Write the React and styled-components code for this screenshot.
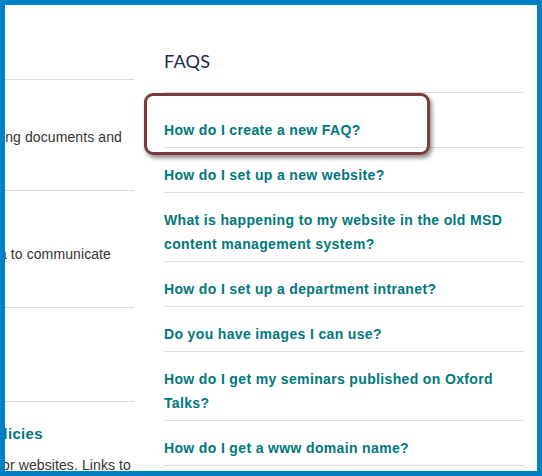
import React from 'react';
import styled, { createGlobalStyle } from 'styled-components';

const GlobalStyle = createGlobalStyle`
  html, body {
    margin: 0;
    padding: 0;
    background: #fff;
  }
`;

const Frame = styled.div`
  box-sizing: border-box;
  width: 542px;
  height: 476px;
  border: 5px solid #0081c6;
  background: #fff;
  overflow: hidden;
  display: flex;
  font-family: "Liberation Sans", Arial, sans-serif;
`;

const LeftColumn = styled.div`
  flex: 0 0 129px;
  padding-top: 74px;
  overflow: hidden;
`;

const Section = styled.div`
  box-sizing: border-box;
  height: ${props => props.h ? props.h + 'px' : 'auto'};
  border-top: 1px solid #dddddd;
  padding-top: ${props => props.pt}px;
`;

const Line = styled.div`
  display: flex;
  justify-content: flex-end;
  white-space: nowrap;
  padding-right: ${props => props.end}px;
  font-size: ${props => props.bold ? 15 : 14}px;
  font-weight: ${props => props.bold ? 700 : 400};
  line-height: 24px;
  letter-spacing: ${props => props.bold ? 0.35 : 0.1}px;
  color: ${props => props.bold ? '#00787c' : '#333333'};
  margin-bottom: ${props => props.mb || 0}px;
`;

const RightColumn = styled.div`
  flex: 0 0 360px;
  margin-left: 30px;
  padding-top: 44px;
`;

const Heading = styled.h2`
  margin: 0 0 10px;
  padding-bottom: 19px;
  border-bottom: 1px solid #dddddd;
  font-family: Lato, "Open Sans", sans-serif;
  font-weight: 400;
  font-size: 18px;
  line-height: 24px;
  letter-spacing: 0.3px;
  color: #1c2b47;
`;

const List = styled.ul`
  list-style: none;
  margin: 0;
  padding: 0;
`;

const Item = styled.li`
  position: relative;
  padding: 15px 0 5px;
  border-bottom: 1px solid #dddddd;
`;

const Link = styled.a`
  font-size: 14px;
  font-weight: 700;
  line-height: 24px;
  color: #00787c;
  text-decoration: none;
  letter-spacing: 0.35px;
`;

// annotation drawn over the first question
const Highlight = styled.div`
  position: absolute;
  left: -20px;
  top: -10px;
  width: 286px;
  height: 62px;
  box-sizing: border-box;
  border: 3px solid #7b3b3e;
  border-radius: 9px;
  box-shadow: 2px 3px 4px rgba(0, 0, 0, 0.45);
  pointer-events: none;
`;

const faqs = [
  'How do I create a new FAQ?',
  'How do I set up a new website?',
  'What is happening to my website in the old MSD content management system?',
  'How do I set up a department intranet?',
  'Do you have images I can use?',
  'How do I get my seminars published on Oxford Talks?',
  'How do I get a www domain name?',
];

export default function App() {
  return (
    <>
      <GlobalStyle />
      <Frame>
        <LeftColumn>
          <Section h={111} pt={45}>
            <Line end={12}>Guidance on managing documents and</Line>
          </Section>
          <Section h={117} pt={51}>
            <Line end={23}>Using social media to communicate</Line>
          </Section>
          <Section h={94} pt={0} />
          <Section pt={20}>
            <Line bold end={91} mb={7}>Web policies</Line>
            <Line end={3}>Policies and guidelines for websites. Links to</Line>
          </Section>
        </LeftColumn>
        <RightColumn>
          <Heading>FAQS</Heading>
          <List>
            {faqs.map((q, i) => (
              <Item key={q}>
                {i === 0 && <Highlight />}
                <Link href="#">{q}</Link>
              </Item>
            ))}
          </List>
        </RightColumn>
      </Frame>
    </>
  );
}
